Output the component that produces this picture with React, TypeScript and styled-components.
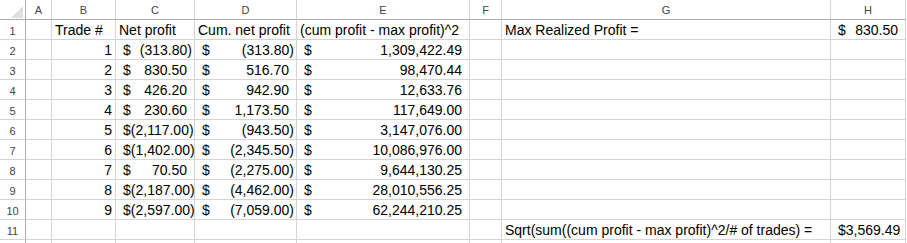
import { Fragment } from "react";
import styled, { createGlobalStyle } from "styled-components";

const GlobalStyle = createGlobalStyle`
  html, body {
    margin: 0;
    padding: 0;
    background: #ffffff;
    overflow: hidden;
  }
`;

const COLS = ["A", "B", "C", "D", "E", "F", "G", "H"];

const Sheet = styled.div`
  display: grid;
  grid-template-columns: 26px 26px 64px 79px 102px 173px 32px 329px 75px;
  grid-auto-rows: 20px;
  width: 906px;
  font-family: "Liberation Sans", Arial, sans-serif;
  font-size: 14px;
  color: #000000;
`;

const Corner = styled.div`
  box-sizing: border-box;
  border-right: 1px solid #ababab;
  border-bottom: 1px solid #ababab;
  display: flex;
  align-items: flex-end;
  justify-content: flex-end;
  padding: 0 2px 1px 0;
`;

const ColHead = styled.div`
  box-sizing: border-box;
  border-right: 1px solid #d4d4d4;
  border-bottom: 1px solid #ababab;
  display: flex;
  align-items: center;
  justify-content: center;
  font-size: 11px;
  color: #444444;
  padding-top: 1px;
`;

const RowHead = styled.div`
  box-sizing: border-box;
  border-right: 1px solid #ababab;
  border-bottom: 1px solid #d4d4d4;
  display: flex;
  align-items: center;
  justify-content: center;
  font-size: 11px;
  color: #444444;
  padding-top: 3px;
`;

const Cell = styled.div<{ $align?: "left" | "right" }>`
  box-sizing: border-box;
  border-right: 1px solid #d4d4d4;
  border-bottom: 1px solid #d4d4d4;
  display: flex;
  align-items: flex-end;
  justify-content: ${(p) => (p.$align === "right" ? "flex-end" : "flex-start")};
  padding: 0 3px 0 3px;
  line-height: 17px;
  white-space: nowrap;
`;

const Money = styled(Cell)`
  justify-content: space-between;
  padding: 0 2px 0 7px;
`;

const Amount = styled.span<{ $neg: boolean }>`
  padding-right: ${(p) => (p.$neg ? "0" : "5px")};
`;

type Row = {
  trade: number;
  net: number;
  cum: number;
  sq: number;
};

const rows: Row[] = [
  { trade: 1, net: -313.8, cum: -313.8, sq: 1309422.49 },
  { trade: 2, net: 830.5, cum: 516.7, sq: 98470.44 },
  { trade: 3, net: 426.2, cum: 942.9, sq: 12633.76 },
  { trade: 4, net: 230.6, cum: 1173.5, sq: 117649.0 },
  { trade: 5, net: -2117.0, cum: -943.5, sq: 3147076.0 },
  { trade: 6, net: -1402.0, cum: -2345.5, sq: 10086976.0 },
  { trade: 7, net: 70.5, cum: -2275.0, sq: 9644130.25 },
  { trade: 8, net: -2187.0, cum: -4462.0, sq: 28010556.25 },
  { trade: 9, net: -2597.0, cum: -7059.0, sq: 62244210.25 },
];

const fmt = (n: number) => {
  const s = Math.abs(n).toLocaleString("en-US", {
    minimumFractionDigits: 2,
    maximumFractionDigits: 2,
  });
  return n < 0 ? `(${s})` : s;
};

const Acct = ({ value }: { value: number }) => (
  <Money>
    <span>$</span>
    <Amount $neg={value < 0}>{fmt(value)}</Amount>
  </Money>
);

const Blank = () => <Cell />;

const App = () => {
  return (
    <>
      <GlobalStyle />
      <Sheet>
        <Corner>
          <svg width="12" height="12" viewBox="0 0 12 12">
            <polygon points="0,12 12,12 12,0" fill="#dfdfdf" />
          </svg>
        </Corner>
        {COLS.map((c) => (
          <ColHead key={c}>{c}</ColHead>
        ))}

        <RowHead>1</RowHead>
        <Blank />
        <Cell>Trade #</Cell>
        <Cell>Net profit</Cell>
        <Cell>Cum. net profit</Cell>
        <Cell>(cum profit - max profit)^2</Cell>
        <Blank />
        <Cell>Max Realized Profit =</Cell>
        <Acct value={830.5} />

        {rows.map((r, i) => (
          <Fragment key={r.trade}>
            <RowHead>{i + 2}</RowHead>
            <Blank />
            <Cell $align="right">{r.trade}</Cell>
            <Acct value={r.net} />
            <Acct value={r.cum} />
            <Acct value={r.sq} />
            <Blank />
            <Blank />
            <Blank />
          </Fragment>
        ))}

        <RowHead>11</RowHead>
        <Blank />
        <Blank />
        <Blank />
        <Blank />
        <Blank />
        <Blank />
        <Cell>Sqrt(sum((cum profit - max profit)^2/# of trades) =</Cell>
        <Money>
          <span>$</span>
          <Amount $neg={false}>3,569.49</Amount>
        </Money>

        <RowHead />
        {COLS.map((c) => (
          <Blank key={`r12${c}`} />
        ))}
      </Sheet>
    </>
  );
};

export default App;
